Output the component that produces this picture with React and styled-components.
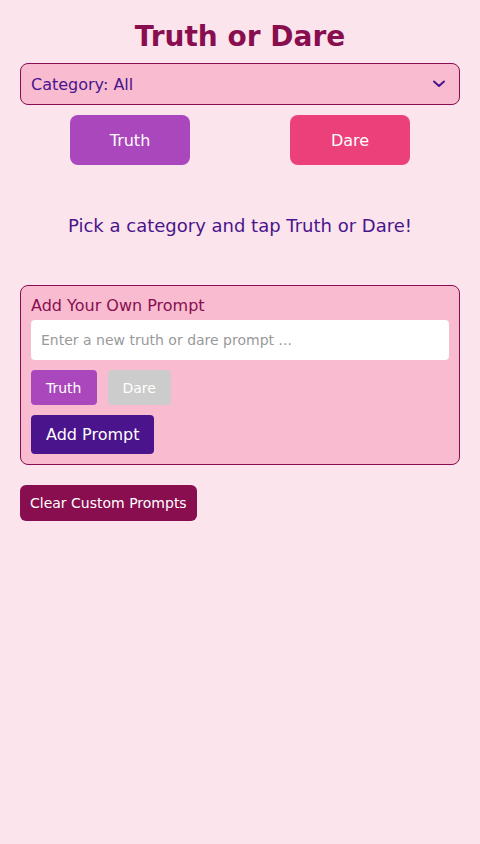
import React, { useState } from 'react';
import styled, { createGlobalStyle } from 'styled-components';

const GlobalStyle = createGlobalStyle`
  html, body {
    margin: 0;
    padding: 0;
    background: #fce4ec;
    font-family: "DejaVu Sans", "Liberation Sans", sans-serif;
  }
  * { box-sizing: border-box; }
`;

const Page = styled.div`
  min-height: 844px;
  padding: 21px 20px 20px;
  background: #fce4ec;
`;

const Title = styled.h1`
  margin: 0 0 10px;
  font-size: 28px;
  line-height: 32px;
  font-weight: bold;
  text-align: center;
  color: #880e4f;
`;

const SelectWrap = styled.div`
  position: relative;
`;

const CategorySelect = styled.select`
  appearance: none;
  width: 100%;
  height: 42px;
  padding: 0 40px 0 10px;
  border: 1px solid #880e4f;
  border-radius: 8px;
  background: #f8bbd0;
  color: #4a148c;
  font-family: inherit;
  font-size: 16px;
  outline: none;
`;

const Chevron = styled.svg`
  position: absolute;
  right: 14px;
  top: 16px;
  pointer-events: none;
`;

const ChoiceRow = styled.div`
  display: flex;
  justify-content: space-around;
  margin-top: 10px;
`;

const ChoiceButton = styled.button`
  width: 120px;
  height: 50px;
  border: none;
  border-radius: 8px;
  background: ${p => p.$bg};
  color: #fff;
  font-family: inherit;
  font-size: 16px;
  cursor: pointer;
`;

const Message = styled.div`
  min-height: 120px;
  display: flex;
  align-items: center;
  justify-content: center;
  text-align: center;
  font-size: 18px;
  color: #4a148c;
`;

const Card = styled.div`
  border: 1px solid #880e4f;
  border-radius: 8px;
  background: #f8bbd0;
  padding: 10px;
`;

const CardTitle = styled.div`
  font-size: 16px;
  line-height: 19px;
  color: #880e4f;
  margin-bottom: 5px;
`;

const PromptInput = styled.input`
  display: block;
  width: 100%;
  height: 40px;
  border: none;
  border-radius: 4px;
  background: #fff;
  padding: 0 10px;
  font-family: inherit;
  font-size: 14px;
  color: #333;
  outline: none;

  &::placeholder {
    color: #999;
  }
`;

const ToggleRow = styled.div`
  display: flex;
  gap: 11px;
  margin-top: 10px;
`;

const ToggleButton = styled.button`
  height: 35px;
  padding: 0 15px;
  border: none;
  border-radius: 4px;
  background: ${p => (p.$active ? '#ab47bc' : '#cccccc')};
  color: #fff;
  font-family: inherit;
  font-size: 14px;
  cursor: pointer;
`;

const AddButton = styled.button`
  display: block;
  height: 39px;
  margin-top: 10px;
  padding: 0 15px;
  border: none;
  border-radius: 4px;
  background: #4a148c;
  color: #fff;
  font-family: inherit;
  font-size: 16px;
  cursor: pointer;
`;

const ClearButton = styled.button`
  display: block;
  height: 36px;
  margin-top: 20px;
  padding: 0 10px;
  border: none;
  border-radius: 6px;
  background: #880e4f;
  color: #fff;
  font-family: inherit;
  font-size: 14px;
  cursor: pointer;
`;

export default function App() {
  const [type, setType] = useState('truth');

  return (
    <>
      <GlobalStyle />
      <Page>
        <Title>Truth or Dare</Title>
        <SelectWrap>
          <CategorySelect defaultValue="all">
            <option value="all">Category: All</option>
            <option value="funny">Category: Funny</option>
            <option value="spicy">Category: Spicy</option>
          </CategorySelect>
          <Chevron width="14" height="10" viewBox="0 0 14 10">
            <path d="M2 2.5 L7 7 L12 2.5" fill="none" stroke="#4a148c" strokeWidth="2" strokeLinecap="round" strokeLinejoin="round" />
          </Chevron>
        </SelectWrap>
        <ChoiceRow>
          <ChoiceButton $bg="#ab47bc">Truth</ChoiceButton>
          <ChoiceButton $bg="#ec407a">Dare</ChoiceButton>
        </ChoiceRow>
        <Message>Pick a category and tap Truth or Dare!</Message>
        <Card>
          <CardTitle>Add Your Own Prompt</CardTitle>
          <PromptInput placeholder="Enter a new truth or dare prompt ..." />
          <ToggleRow>
            <ToggleButton $active={type === 'truth'} onClick={() => setType('truth')}>Truth</ToggleButton>
            <ToggleButton $active={type === 'dare'} onClick={() => setType('dare')}>Dare</ToggleButton>
          </ToggleRow>
          <AddButton>Add Prompt</AddButton>
        </Card>
        <ClearButton>Clear Custom Prompts</ClearButton>
      </Page>
    </>
  );
}
